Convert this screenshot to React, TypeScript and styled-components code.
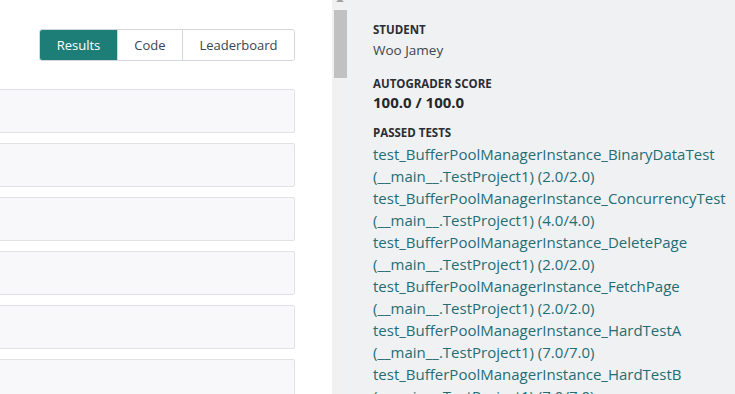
import styled, { createGlobalStyle } from "styled-components";

const GlobalStyle = createGlobalStyle`
  html, body {
    margin: 0;
    padding: 0;
    background: #ffffff;
    font-family: "Open Sans", "Liberation Sans", sans-serif;
  }
`;

const Page = styled.div`
  display: flex;
  width: 735px;
  height: 394px;
  overflow: hidden;
`;

const LeftPane = styled.div`
  width: 295px;
  padding: 29px 37px 0 0;
  background: #ffffff;
  display: flex;
  flex-direction: column;
`;

const Toolbar = styled.div`
  display: flex;
  justify-content: flex-end;
  margin-bottom: 28px;
`;

const TabGroup = styled.div`
  display: flex;
  border-radius: 3px;
  overflow: hidden;
  border: 1px solid #d3d6dc;
`;

const Tab = styled.button<{ $active?: boolean; $w: number }>`
  width: ${(p) => p.$w}px;
  height: 30px;
  border: none;
  border-left: 1px solid ${(p) => (p.$active ? "#1c7d75" : "#d3d6dc")};
  &:first-child {
    border-left: none;
  }
  background: ${(p) => (p.$active ? "#1d7e77" : "#ffffff")};
  color: ${(p) => (p.$active ? "#ffffff" : "#3b4550")};
  font-family: inherit;
  font-size: 13px;
  padding: 0;
`;

const CardList = styled.div`
  display: flex;
  flex-direction: column;
  gap: 10px;
`;

const Card = styled.div`
  height: 42px;
  margin-left: -2px;
  background: #f8f8fa;
  border: 1px solid #e1e1e7;
  border-radius: 2px;
  flex-shrink: 0;
`;

const Scrollbar = styled.div`
  width: 16px;
  background: #f1f1f1;
  display: flex;
  flex-direction: column;
  align-items: center;
`;

const ScrollArrow = styled.div`
  width: 0;
  height: 0;
  margin-top: -2px;
  border-left: 4px solid transparent;
  border-right: 4px solid transparent;
  border-bottom: 4px solid #a3a3a3;
`;

const Thumb = styled.div`
  width: 13px;
  height: 68px;
  margin-top: 8px;
  margin-left: 1px;
  background: #c1c1c1;
`;

const RightPane = styled.div`
  flex: 1;
  background: #f0f1f3;
  padding: 22px 0 0 25px;
`;

const Label = styled.div`
  font-size: 11.5px;
  font-weight: 700;
  color: #2a2d31;
  line-height: 16px;
  margin-bottom: 2px;
`;

const Value = styled.div<{ $bold?: boolean }>`
  font-size: ${(p) => (p.$bold ? "15px" : "13.5px")};
  font-weight: ${(p) => (p.$bold ? 700 : 400)};
  color: ${(p) => (p.$bold ? "#24272b" : "#3b4752")};
  line-height: ${(p) => (p.$bold ? "16px" : "20px")};
  margin-bottom: ${(p) => (p.$bold ? "15px" : "16px")};
`;

const TestList = styled.div`
  margin-top: 2px;
`;

const TestLine = styled.div`
  font-size: 15px;
  color: #1f6e75;
  line-height: 22px;
  white-space: nowrap;
`;

const tests = [
  ["BinaryDataTest", "2.0/2.0"],
  ["ConcurrencyTest", "4.0/4.0"],
  ["DeletePage", "2.0/2.0"],
  ["FetchPage", "2.0/2.0"],
  ["HardTestA", "7.0/7.0"],
  ["HardTestB", "7.0/7.0"],
];

export default function App() {
  return (
    <Page>
      <GlobalStyle />
      <LeftPane>
        <Toolbar>
          <TabGroup>
            <Tab $active $w={77}>Results</Tab>
            <Tab $w={65}>Code</Tab>
            <Tab $w={112}>Leaderboard</Tab>
          </TabGroup>
        </Toolbar>
        <CardList>
          {Array.from({ length: 6 }).map((_, i) => (
            <Card key={i} />
          ))}
        </CardList>
      </LeftPane>
      <Scrollbar>
        <ScrollArrow />
        <Thumb />
      </Scrollbar>
      <RightPane>
        <Label>STUDENT</Label>
        <Value>Woo Jamey</Value>
        <Label>AUTOGRADER SCORE</Label>
        <Value $bold>100.0 / 100.0</Value>
        <Label>PASSED TESTS</Label>
        <TestList>
          {tests.map(([name, score]) => (
            <div key={name}>
              <TestLine>test_BufferPoolManagerInstance_{name}</TestLine>
              <TestLine>(__main__.TestProject1) ({score})</TestLine>
            </div>
          ))}
        </TestList>
      </RightPane>
    </Page>
  );
}
